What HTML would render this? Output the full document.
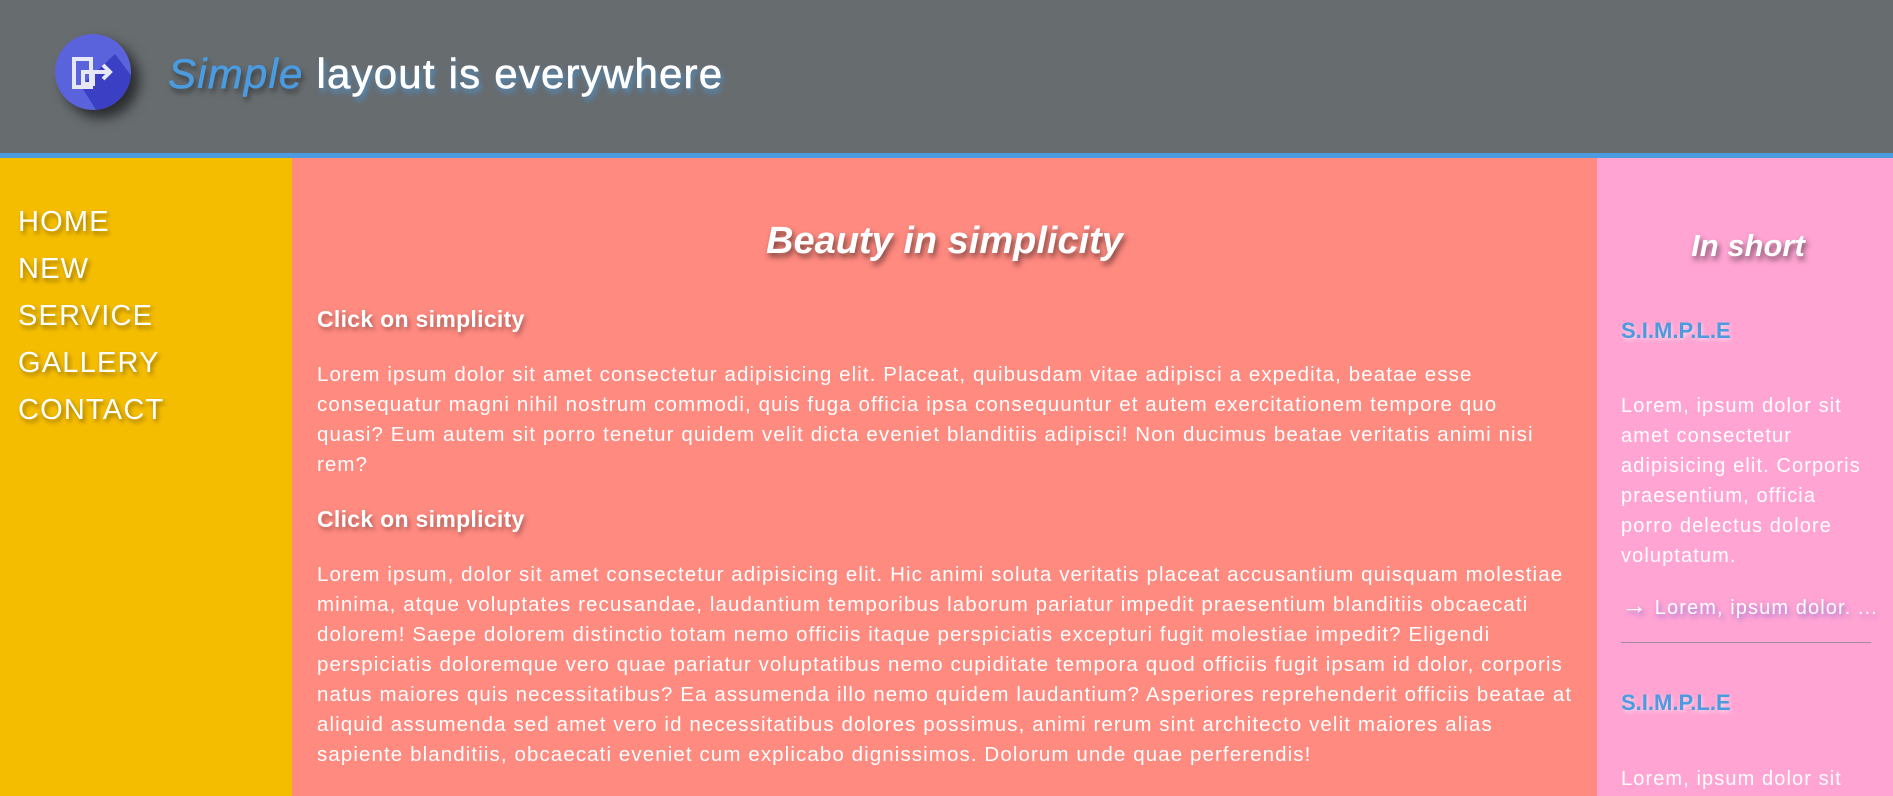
<!DOCTYPE html>
<html><head><meta charset="utf-8"><style>
*{margin:0;padding:0;box-sizing:border-box}
body{width:1893px;height:796px;overflow:hidden;font-family:"Liberation Sans",sans-serif;color:#fff;background:#ff8a80}
header{position:absolute;left:0;top:0;width:1893px;background:#676c6f;border-bottom:5px solid #4a9be0;height:158px}
.logo{position:absolute;left:55px;top:34px;width:76px;height:76px;border-radius:50%;background:#5b63dc;box-shadow:8px 8px 12px rgba(0,0,0,.6);overflow:hidden}
.title{position:absolute;left:168px;top:50px;font-size:42px;text-shadow:2px 4px 6px rgba(74,155,224,.8);letter-spacing:1.2px;-webkit-text-stroke:0.6px #fff}
.title i{color:#4a9be0;-webkit-text-stroke:0.6px #4a9be0;text-shadow:2px 4px 6px rgba(0,0,0,.5)}
nav{position:absolute;left:0;top:158px;width:292px;height:638px;background:#f5bd00}
nav div{position:absolute;left:18px;font-size:29px;letter-spacing:1.2px;text-shadow:2px 3px 5px rgba(0,0,0,.4)}
main{position:absolute;left:292px;top:158px;width:1305px;height:638px;background:#ff8a80}
main h1{position:absolute;left:0;width:1305px;text-align:center;top:62px;font-size:38px;font-style:italic;text-shadow:2px 4px 6px rgba(0,0,0,.5)}
main h2{position:absolute;left:25px;font-size:23px;letter-spacing:0.3px;text-shadow:2px 3px 5px rgba(0,0,0,.35)}
main p{position:absolute;left:25px;white-space:nowrap;font-size:20.5px;line-height:30px;letter-spacing:1.1px}
aside{position:absolute;left:1597px;top:158px;width:296px;height:638px;background:#ffa4d3}
aside h1{position:absolute;left:0;width:302px;text-align:center;top:70px;font-size:31px;font-style:italic;text-shadow:2px 4px 6px rgba(0,0,0,.5)}
aside h3{position:absolute;left:24px;font-size:22px;color:#4a9be0;font-weight:bold;text-shadow:1px 2px 4px rgba(255,255,255,.6)}
aside p{position:absolute;left:24px;white-space:nowrap;font-size:20px;line-height:30px;letter-spacing:1.1px}
</style></head><body>
<header>
<div class="logo"><svg width="76" height="76" viewBox="0 0 76 76"><polygon points="26,52 60,20 90,60 50,90" fill="#3a3fc4"/><rect x="19" y="25" width="17" height="28" fill="none" stroke="#e6e8f8" stroke-width="4"/><rect x="28" y="38" width="10" height="12" fill="none" stroke="#e6e8f8" stroke-width="4"/><path d="M36 38 H54 M48 31 L55 38 L48 45" fill="none" stroke="#e6e8f8" stroke-width="4"/></svg></div>
<div class="title"><i>Simple</i> layout is everywhere</div>
</header>
<nav>
<div style="top:48px">HOME</div>
<div style="top:95px">NEW</div>
<div style="top:142px">SERVICE</div>
<div style="top:189px">GALLERY</div>
<div style="top:236px">CONTACT</div>
</nav>
<main>
<h1>Beauty in simplicity</h1>
<h2 style="top:148px">Click on simplicity</h2>
<p style="top:202px">Lorem ipsum dolor sit amet consectetur adipisicing elit. Placeat, quibusdam vitae adipisci a expedita, beatae esse<br>consequatur magni nihil nostrum commodi, quis fuga officia ipsa consequuntur et autem exercitationem tempore quo<br>quasi? Eum autem sit porro tenetur quidem velit dicta eveniet blanditiis adipisci! Non ducimus beatae veritatis animi nisi<br>rem?</p>
<h2 style="top:348px">Click on simplicity</h2>
<p style="top:402px">Lorem ipsum, dolor sit amet consectetur adipisicing elit. Hic animi soluta veritatis placeat accusantium quisquam molestiae<br>minima, atque voluptates recusandae, laudantium temporibus laborum pariatur impedit praesentium blanditiis obcaecati<br>dolorem! Saepe dolorem distinctio totam nemo officiis itaque perspiciatis excepturi fugit molestiae impedit? Eligendi<br>perspiciatis doloremque vero quae pariatur voluptatibus nemo cupiditate tempora quod officiis fugit ipsam id dolor, corporis<br>natus maiores quis necessitatibus? Ea assumenda illo nemo quidem laudantium? Asperiores reprehenderit officiis beatae at<br>aliquid assumenda sed amet vero id necessitatibus dolores possimus, animi rerum sint architecto velit maiores alias<br>sapiente blanditiis, obcaecati eveniet cum explicabo dignissimos. Dolorum unde quae perferendis!</p>
</main>
<aside>
<h1>In short</h1>
<h3 style="top:160px">S.I.M.P.L.E</h3>
<p style="top:233px">Lorem, ipsum dolor sit<br>amet consectetur<br>adipisicing elit. Corporis<br>praesentium, officia<br>porro delectus dolore<br>voluptatum.</p>
<p style="top:432px;text-shadow:2px 3px 5px rgba(90,90,220,.6)"><span style="font-size:26px">→</span> Lorem, ipsum dolor. ...</p>
<div style="position:absolute;left:24px;top:484px;width:250px;height:1px;background:#a78a9a"></div>
<h3 style="top:532px">S.I.M.P.L.E</h3>
<p style="top:606px">Lorem, ipsum dolor sit</p>
</aside>
</body></html>
